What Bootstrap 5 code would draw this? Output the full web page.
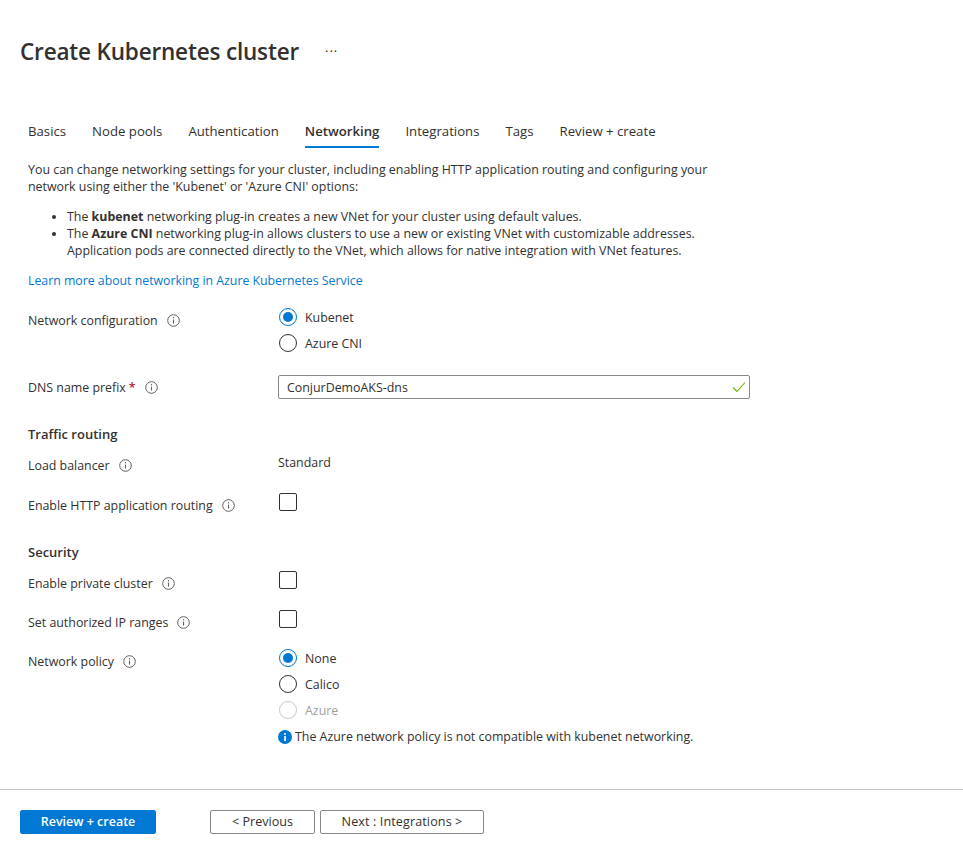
<!DOCTYPE html>
<html lang="en">
<head>
    <meta charset="UTF-8">
    <meta name="viewport" content="width=device-width, initial-scale=1.0">
    <title>Create Kubernetes cluster</title>
    <link href="https://cdn.jsdelivr.net/npm/bootstrap@5.3.0/dist/css/bootstrap.min.css" rel="stylesheet">
    <style>
        body { font-family: "Open Sans", "Noto Sans", sans-serif; font-size: 12.4px; line-height: 17px; color: #323130; background: #fff; height: 859px; }
        .page-title { font-size: 22.5px; line-height: 31px; font-weight: 600; color: #323130; margin: 0; letter-spacing: -.17px; }
        .title-bar { padding: 36px 0 0 20px; height: 122px; }
        .title-more { margin-left: 26px; font-size: 13px; line-height: 31px; letter-spacing: 1px; }
        .tab-strip { gap: 26px; padding-left: 28px; height: 26px; }
        .tab-item { color: #323130; height: 26px; line-height: 19px; text-decoration: none; font-size: 13.2px; }
        .tab-item.is-active { font-weight: 600; border-bottom: 2px solid #0078d4; }
        .form-body { padding: 13px 0 0 28px; }
        .intro { width: 690px; margin: 0 0 13px; }
        .intro-list { width: 690px; margin: 0 0 13px; padding-left: 39px; }
        .learn-link { color: #0078d4; text-decoration: none; font-size: 12.3px; }
        .form-line { display: flex; align-items: flex-start; }
        .line-label { width: 250px; flex-shrink: 0; display: flex; align-items: center; margin-top: 4px; margin-bottom: -4px; }
        .tip-icon { margin-left: 9px; flex-shrink: 0; }
        .req-mark { color: #a4262c; margin-left: 3px; font-weight: 600; }
        .radio-group { display: flex; flex-direction: column; gap: 8px; }
        .radio-item { display: flex; align-items: center; height: 18px; gap: 8px; }
        .radio-dot { width: 18px; height: 18px; border: 1px solid #323130; border-radius: 50%; flex-shrink: 0; margin-left: 1px; }
        .radio-dot.is-on { border-color: #0078d4; position: relative; }
        .radio-dot.is-on::after { content: ""; position: absolute; left: 3px; top: 3px; width: 10px; height: 10px; border-radius: 50%; background: #0078d4; }
        .radio-item.is-off { color: #a19f9d; }
        .radio-item.is-off .radio-dot { border-color: #c8c6c4; }
        .check-box { width: 18px; height: 18px; border: 1px solid #323130; border-radius: 2px; margin-left: 1px; }
        .dns-input { width: 472px; height: 24px; border: 1px solid #8a8886; border-radius: 2px; padding: 0 3px 0 8px; }
        .line-dns .line-label { margin-top: 4px; margin-bottom: 0; }
        .line-lb .line-label { margin-top: 3px; margin-bottom: -3px; }
        .section-head { font-weight: 600; font-size: 13px; }
        .policy-note { display: flex; align-items: center; gap: 3px; margin-top: 9px; }
        .wizard-foot { margin-top: 44px; border-top: 1px solid #c8c6c4; padding: 20px 0 0 20px; }
        .foot-btn { height: 24px; padding: 0; border-radius: 2px; font-size: 12.6px; line-height: 22px; font-weight: 400; }
        .foot-primary { width: 136px; background: #0078d4; border-color: #0078d4; color: #fff; font-weight: 600; font-size: 12.5px; margin-right: 54px; }
        .foot-plain { background: #fff; border-color: #8a8886; color: #323130; }
        .btn-prev { width: 105px; margin-right: 5px; }
        .btn-next { width: 164px; letter-spacing: .1px; }
        .line-net { margin-top: 19px; }
        .line-dns { margin-top: 23px; }
        .head-traffic { margin-top: 27px; }
        .line-lb { margin-top: 11px; }
        .line-http { margin-top: 22px; }
        .head-security { margin-top: 33px; }
        .line-private { margin-top: 10px; }
        .line-ip { margin-top: 21px; }
        .line-policy { margin-top: 21px; }
    </style>
</head>
<body>

    <svg width="0" height="0" class="d-block">
        <defs>
            <symbol id="tip" viewBox="0 0 13 13">
                <circle cx="6.5" cy="6.5" r="5.8" fill="none" stroke="#605e5c" stroke-width="1"/>
                <path d="M6.5 5.6v3.9" stroke="#605e5c" stroke-width="1.1" fill="none"/>
                <circle cx="6.5" cy="3.8" r=".7" fill="#605e5c"/>
            </symbol>
        </defs>
    </svg>

    <div class="title-bar d-flex align-items-start">
        <h1 class="page-title">Create Kubernetes cluster</h1>
        <span class="title-more">···</span>
    </div>

    <nav class="tab-strip d-flex">
        <a class="tab-item" href="#">Basics</a>
        <a class="tab-item" href="#">Node pools</a>
        <a class="tab-item" href="#">Authentication</a>
        <a class="tab-item is-active" href="#">Networking</a>
        <a class="tab-item" href="#">Integrations</a>
        <a class="tab-item" href="#">Tags</a>
        <a class="tab-item" href="#">Review + create</a>
    </nav>

    <div class="form-body">
        <p class="intro">You can change networking settings for your cluster, including enabling HTTP application routing and configuring your network using either the 'Kubenet' or 'Azure CNI' options:</p>
        <ul class="intro-list">
            <li>The <strong>kubenet</strong> networking plug-in creates a new VNet for your cluster using default values.</li>
            <li>The <strong>Azure CNI</strong> networking plug-in allows clusters to use a new or existing VNet with customizable addresses. Application pods are connected directly to the VNet, which allows for native integration with VNet features.</li>
        </ul>
        <a class="learn-link" href="#">Learn more about networking in Azure Kubernetes Service</a>

        <div class="form-line line-net">
            <div class="line-label">Network configuration <svg class="tip-icon" width="13" height="13"><use href="#tip"/></svg></div>
            <div class="radio-group">
                <div class="radio-item"><span class="radio-dot is-on"></span>Kubenet</div>
                <div class="radio-item"><span class="radio-dot"></span>Azure CNI</div>
            </div>
        </div>

        <div class="form-line line-dns">
            <div class="line-label">DNS name prefix<span class="req-mark">*</span> <svg class="tip-icon" width="13" height="13"><use href="#tip"/></svg></div>
            <div class="dns-input d-flex align-items-center justify-content-between">
                <span>ConjurDemoAKS-dns</span>
                <svg width="14" height="12" viewBox="0 0 14 12"><path d="M1 6.5 5 10.5 13 1.5" fill="none" stroke="#6bb700" stroke-width="1.1"/></svg>
            </div>
        </div>

        <div class="section-head head-traffic">Traffic routing</div>

        <div class="form-line line-lb">
            <div class="line-label">Load balancer <svg class="tip-icon" width="13" height="13"><use href="#tip"/></svg></div>
            <div>Standard</div>
        </div>

        <div class="form-line line-http">
            <div class="line-label">Enable HTTP application routing <svg class="tip-icon" width="13" height="13"><use href="#tip"/></svg></div>
            <div class="check-box"></div>
        </div>

        <div class="section-head head-security">Security</div>

        <div class="form-line line-private">
            <div class="line-label">Enable private cluster <svg class="tip-icon" width="13" height="13"><use href="#tip"/></svg></div>
            <div class="check-box"></div>
        </div>

        <div class="form-line line-ip">
            <div class="line-label">Set authorized IP ranges <svg class="tip-icon" width="13" height="13"><use href="#tip"/></svg></div>
            <div class="check-box"></div>
        </div>

        <div class="form-line line-policy">
            <div class="line-label">Network policy <svg class="tip-icon" width="13" height="13"><use href="#tip"/></svg></div>
            <div>
                <div class="radio-group">
                    <div class="radio-item"><span class="radio-dot is-on"></span>None</div>
                    <div class="radio-item"><span class="radio-dot"></span>Calico</div>
                    <div class="radio-item is-off"><span class="radio-dot"></span>Azure</div>
                </div>
                <div class="policy-note">
                    <svg width="14" height="14" viewBox="0 0 14 14"><circle cx="7" cy="7" r="7" fill="#0078d4"/><rect x="6.2" y="6" width="1.7" height="5" fill="#fff"/><circle cx="7" cy="3.9" r="1" fill="#fff"/></svg>
                    The Azure network policy is not compatible with kubenet networking.
                </div>
            </div>
        </div>
    </div>

    <div class="wizard-foot d-flex">
        <button class="btn foot-btn foot-primary" type="button">Review + create</button>
        <button class="btn foot-btn foot-plain btn-prev" type="button">&lt; Previous</button>
        <button class="btn foot-btn foot-plain btn-next" type="button">Next : Integrations &gt;</button>
    </div>

</body>
</html>
